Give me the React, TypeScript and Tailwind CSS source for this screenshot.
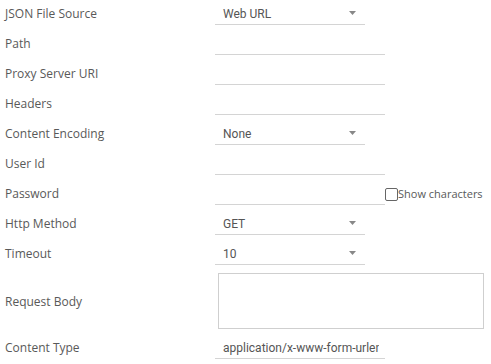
import React from "react";

const labelCls = "w-[215px] shrink-0 pl-[5px] text-[12px] text-[#595959] leading-none";
const labelFont = { fontFamily: '"Open Sans", sans-serif' };
const valFont = { fontFamily: 'Roboto, sans-serif' };

function Row({ label, children }: { label: string; children?: React.ReactNode }) {
  return (
    <div className="flex h-[30px] items-start">
      <div className="flex h-[25px] items-center pt-[3px]">
        <span className={labelCls} style={labelFont}>{label}</span>
      </div>
      {children}
    </div>
  );
}

function Select({ value }: { value: string }) {
  return (
    <div className="flex h-[25px] w-[150px] items-center justify-between border-b border-[#d4d4d4] pl-[8px] pr-[9px] pt-[3px]">
      <span className="text-[12px] text-[#555]" style={valFont}>{value}</span>
      <svg width="7" height="4" viewBox="0 0 7 4" className="mb-[1px]"><path d="M0 0H7L3.5 4Z" fill="#888" /></svg>
    </div>
  );
}

function Input({ value }: { value?: string }) {
  return (
    <div className="flex h-[25px] w-[170px] items-center overflow-hidden whitespace-nowrap border-b border-[#d4d4d4] pl-[8px] pr-[6px] pt-[3px]">
      <span className="overflow-hidden text-[12px] text-[#555]" style={valFont}>{value ?? ""}</span>
    </div>
  );
}

export default function App() {
  return (
    <div className="h-[364px] w-[491px] bg-white">
      <Row label="JSON File Source"><Select value="Web URL" /></Row>
      <Row label="Path"><Input /></Row>
      <Row label="Proxy Server URI"><Input /></Row>
      <Row label="Headers"><Input /></Row>
      <Row label="Content Encoding"><Select value="None" /></Row>
      <Row label="User Id"><Input /></Row>
      <Row label="Password">
        <Input />
        <div className="flex h-[25px] items-center pt-[3px]">
          <span className="box-border h-[13px] w-[13px] rounded-[2px] border border-[#666] bg-white" />
          <span className="text-[11px] text-[#595959]" style={labelFont}>Show characters</span>
        </div>
      </Row>
      <Row label="Http Method"><Select value="GET" /></Row>
      <Row label="Timeout"><Select value="10" /></Row>
      <div className="flex h-[64px] items-center">
        <span className={labelCls} style={labelFont}>Request Body</span>
        <div className="ml-[3px] mb-[5px] mt-[3px] h-[56px] w-[266px] border border-[#cfcfcf]" />
      </div>
      <Row label="Content Type"><Input value="application/x-www-form-urlencoded" /></Row>
    </div>
  );
}
